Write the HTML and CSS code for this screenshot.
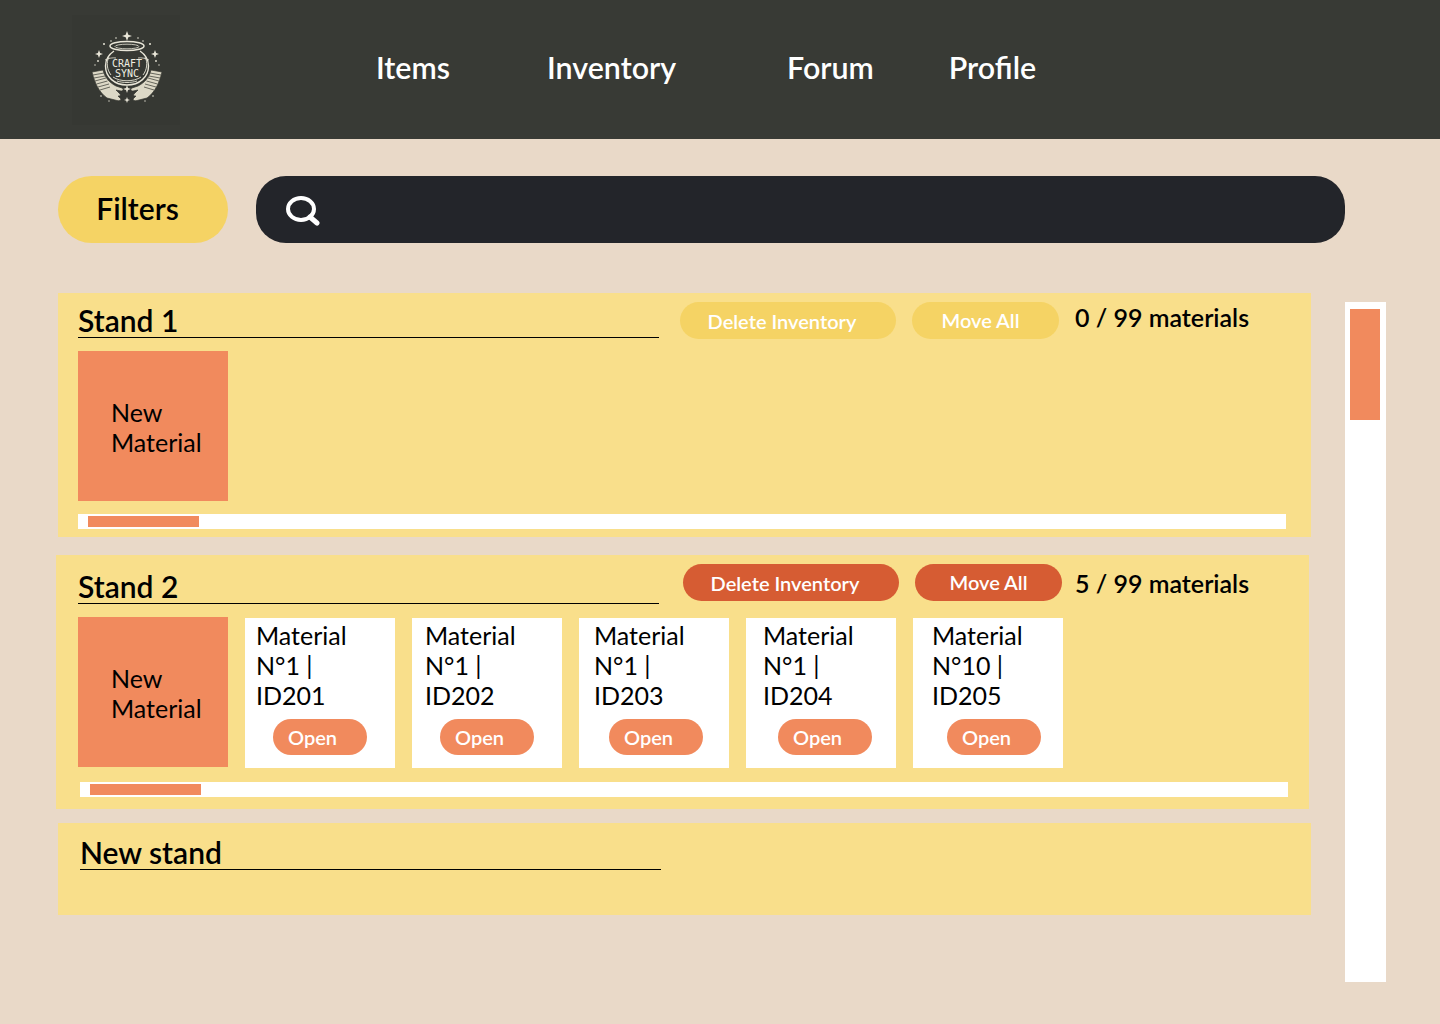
FILE: index.html
```html
<!DOCTYPE html>
<html lang="en">
<head>
<meta charset="utf-8">
<title>CraftSync</title>
<link rel="stylesheet" href="styles.css">
</head>
<body>
<header class="topbar">
  <div class="logo">
    <svg class="logo-art" viewBox="0 0 80 80" width="80" height="80" aria-hidden="true">
      <g fill="#e9e6d8">
        <path d="M40 1l1.300 3.700L45 6l-3.700 1.300L40 11l-1.300-3.700L35 6l3.700-1.300z"/>
        <path d="M12 20l1.100 2.900 2.900 1.100-2.900 1.100-1.100 2.900-1.100-2.900L8 24l2.900-1.100z"/>
        <path d="M68 20l1.100 2.900 2.900 1.100-2.900 1.100-1.100 2.900-1.100-2.900L64 24l2.900-1.100z"/>
        <path d="M40 55l1 3 3 1-3 1-1 3-1-3-3-1 3-1z"/>
        <path d="M40 67l.8 2.200 2.200.8-2.200.8-.8 2.200-.8-2.200-2.200-.8 2.200-.8z"/>
        <circle cx="29" cy="8" r=".8"/><circle cx="51" cy="8" r=".8"/><circle cx="24" cy="11" r=".8"/><circle cx="56" cy="11" r=".8"/>
        <circle cx="17" cy="14" r="1"/><circle cx="63" cy="14" r="1"/><circle cx="11" cy="31" r=".9"/><circle cx="69" cy="31" r=".9"/>
        <circle cx="8" cy="35" r=".7"/><circle cx="72" cy="35" r=".7"/>
        <circle cx="14" cy="66" r=".8"/><circle cx="66" cy="66" r=".8"/><circle cx="22" cy="71" r=".7"/><circle cx="58" cy="71" r=".7"/>
      </g>
      <g fill="none" stroke="#e9e6d8">
        <ellipse cx="40" cy="16" rx="17" ry="4.600" stroke-width="1.500"/>
        <ellipse cx="40" cy="16.500" rx="12" ry="2.300" stroke-width=".8"/>
        <path d="M27 21c-6 4-8.500 9-8.500 15 0 11 9 19 21.500 19s21.500-8 21.500-19c0-6-2.500-11-8.500-15" stroke-width="1.400"/>
        <path d="M22 27c-3 5-2 13 2 18M58 27c3 5 2 13-2 18M26 47c7 5 21 5 28 0M30 51c6 2 14 2 20 0" stroke-width=".9"/>
        <path d="M18 30c4-2 8-2.500 11-2M62 30c-4-2-8-2.500-11-2" stroke-width=".8"/>
      </g>
      <g fill="#dcd8c6" stroke="#33352f" stroke-width=".7">
        <path d="M5 42l11-2c2 8 7 13 13 16l6 2c2 1 1 3-1 3l-5-1 4 4c1 1 0 2.500-2 2l3 3c0 1.500-2 2-4 1.500L20 68C12 62 8 54 5 42z"/>
        <path d="M75 42l-11-2c-2 8-7 13-13 16l-6 2c-2 1-1 3 1 3l5-1-4 4c-1 1 0 2.500 2 2l-3 3c0 1.500 2 2 4 1.500L60 68C68 62 72 54 75 42z"/>
      </g>
      <g fill="none" stroke="#33352f" stroke-width=".7">
        <path d="M6 45l11-2M7 48l11-2M8 51l11-3M9.500 54l11-3M11 57l11-3M13 60l10-3M67 60l-10-3M69 57l-11-3M70.500 54l-11-3M72 51l-11-3M73 48l-11-2M74 45l-11-2"/>
      </g>
      <text class="logo-word" x="40" y="37" text-anchor="middle">CRAFT</text>
      <text class="logo-word" x="40" y="47" text-anchor="middle">SYNC</text>
    </svg>
  </div>
  <nav class="nav">
    <a class="nav-link nav-items">Items</a>
    <a class="nav-link nav-inventory">Inventory</a>
    <a class="nav-link nav-forum">Forum</a>
    <a class="nav-link nav-profile">Profile</a>
  </nav>
</header>

<section class="toolbar">
  <button class="filters">Filters</button>
  <div class="search">
    <svg class="search-icon" viewBox="0 0 36 32" width="36" height="32" aria-hidden="true">
      <ellipse cx="17" cy="15" rx="13" ry="11" fill="none" stroke="#fff" stroke-width="4"/>
      <path d="M26 23l7 6" fill="none" stroke="#fff" stroke-width="5" stroke-linecap="round"/>
    </svg>
  </div>
</section>

<main class="workspace">
  <div class="stands">
    <section class="stand stand-one">
      <div class="stand-head">
        <h2 class="stand-title">Stand 1</h2>
        <div class="actions">
          <button class="pill pill-delete is-disabled">Delete Inventory</button>
          <button class="pill pill-move is-disabled">Move All</button>
          <span class="count">0 / 99 materials</span>
        </div>
      </div>
      <div class="materials">
        <div class="new-material">New Material</div>
      </div>
      <div class="hscroll"><div class="hthumb"></div></div>
    </section>

    <section class="stand stand-two">
      <div class="stand-head">
        <h2 class="stand-title">Stand 2</h2>
        <div class="actions">
          <button class="pill pill-delete">Delete Inventory</button>
          <button class="pill pill-move">Move All</button>
          <span class="count">5 / 99 materials</span>
        </div>
      </div>
      <div class="materials">
        <div class="new-material">New Material</div>
        <article class="card"><p class="card-text">Material N°1 | ID201</p><button class="open">Open</button></article>
        <article class="card"><p class="card-text">Material N°1 | ID202</p><button class="open">Open</button></article>
        <article class="card"><p class="card-text">Material N°1 | ID203</p><button class="open">Open</button></article>
        <article class="card"><p class="card-text">Material N°1 | ID204</p><button class="open">Open</button></article>
        <article class="card"><p class="card-text">Material N°10 | ID205</p><button class="open">Open</button></article>
      </div>
      <div class="hscroll"><div class="hthumb"></div></div>
    </section>

    <section class="stand stand-new">
      <h2 class="stand-title">New stand</h2>
    </section>
  </div>
  <aside class="vscroll"><div class="vthumb"></div></aside>
</main>
</body>
</html>
```

FILE: styles.css
```css
* { box-sizing: border-box; }

html, body { margin: 0; padding: 0; }

body {
  width: 1440px;
  height: 1024px;
  overflow: hidden;
  background: #e9d9c8;
  color: #000;
  font-family: Lato, "Open Sans", sans-serif;
}

button {
  border: 0;
  font-family: inherit;
  padding: 0;
}

/* Header */
.topbar {
  height: 139px;
  background: #383a35;
  display: flex;
  padding: 15px 0 0 72px;
}

.logo {
  width: 108px;
  height: 110px;
  padding-left: 2px;
  background: #363833;
  display: flex;
  align-items: center;
  justify-content: center;
}

.logo-art { display: block; }

.logo-word {
  font-family: "DejaVu Sans Mono", monospace;
  font-size: 10px;
  fill: #f0eee2;
}

.nav {
  display: flex;
  height: 103px;
  align-items: center;
  margin-left: 196px;
}

.nav-link {
  color: #fff;
  font-size: 30.4px;
  font-weight: 600;
  line-height: 36px;
}

.nav-inventory { margin-left: 97px; }
.nav-forum { margin-left: 111px; }
.nav-profile { margin-left: 75px; }

/* Toolbar */
.toolbar {
  display: flex;
  gap: 28px;
  margin: 37px 0 0 58px;
}

.filters {
  width: 170px;
  height: 67px;
  padding: 0 11px 3px 0;
  border-radius: 34px;
  background: #f5d364;
  color: #000;
  font-size: 30px;
  font-weight: 600;
}

.search {
  width: 1089px;
  height: 67px;
  border-radius: 30px;
  background: #23252a;
  display: flex;
  align-items: center;
  padding: 0 0 0 28px;
}

.search-icon { display: block; }

/* Workspace */
.workspace {
  display: flex;
  margin-top: 50px;
  align-items: flex-start;
}

.stands {
  width: 1345px;
  flex: none;
}

.stand {
  background: #f9df8b;
  width: 1253px;
}

.stand-one {
  height: 244px;
  margin-left: 58px;
  padding: 9px 0 0 20px;
}

.stand-two {
  height: 254px;
  margin: 18px 0 0 56px;
  padding: 9px 0 0 22px;
}

.stand-new {
  height: 92px;
  margin: 14px 0 0 58px;
  padding: 9px 0 0 22px;
}

.stand-head {
  display: flex;
  height: 49px;
}

.stand-two .stand-head { height: 53px; }

.stand-title {
  width: 581px;
  height: 36px;
  margin: 0;
  border-bottom: 1px solid #000;
  font-size: 30px;
  font-weight: 600;
  line-height: 36px;
  white-space: nowrap;
}

.stand-two .stand-title { height: 40px; line-height: 44px; }
.stand-new .stand-title { height: 38px; line-height: 40px; }

.actions {
  display: flex;
  align-items: flex-start;
  margin-left: 21px;
}

.stand-two .actions { margin-left: 24px; }

.pill {
  height: 37px;
  border-radius: 19px;
  background: #d65c33;
  color: #fff;
  font-size: 20px;
  font-weight: 600;
}

.pill.is-disabled { background: #f5d364; }

.pill-delete { width: 216px; padding: 0 12px 0 0; }
.pill-move { width: 147px; margin-left: 16px; padding-bottom: 2px; }
.stand-one .pill-move { padding-right: 10px; }

.count {
  margin-left: 16px;
  font-size: 25px;
  font-weight: 600;
  line-height: 30px;
  white-space: nowrap;
}

.stand-two .count { margin: 4px 0 0 13px; }

.materials {
  display: flex;
  align-items: flex-start;
  height: 150px;
  gap: 17px;
}

.new-material {
  width: 150px;
  height: 150px;
  flex: none;
  background: #f18a5d;
  font-size: 25px;
  line-height: 30px;
  padding: 46px 20px 0 33px;
}

.card {
  width: 150px;
  height: 150px;
  flex: none;
  margin-top: 1px;
  background: #fff;
  padding: 2px 0 0 11px;
}

.card-text {
  margin: 0;
  width: 112px;
  font-size: 25px;
  line-height: 30px;
}

.open {
  display: block;
  width: 94px;
  height: 36px;
  margin: 9px 0 0 17px;
  padding: 0 15px;
  border-radius: 18px;
  background: #f18a5d;
  color: #fff;
  font-size: 20px;
  font-weight: 600;
  text-align: left;
}

.card:nth-child(n+3) .open { margin-left: 15px; }
.card:nth-child(3) { padding-left: 13px; }
.card:nth-child(4) { padding-left: 15px; }
.card:nth-child(5) { padding-left: 17px; }
.card:nth-child(6) { padding-left: 19px; }

.hscroll {
  width: 1208px;
  height: 15px;
  margin-top: 13px;
  padding: 2px 0 0 10px;
  background: #fff;
}

.stand-two .hscroll { margin: 15px 0 0 2px; }

.hthumb {
  width: 111px;
  height: 11px;
  background: #f18a5d;
}

.vscroll {
  width: 41px;
  height: 680px;
  margin-top: 9px;
  padding: 7px 6px 0 5px;
  background: #fff;
  flex: none;
}

.vthumb {
  width: 30px;
  height: 111px;
  background: #f18a5d;
}
```
